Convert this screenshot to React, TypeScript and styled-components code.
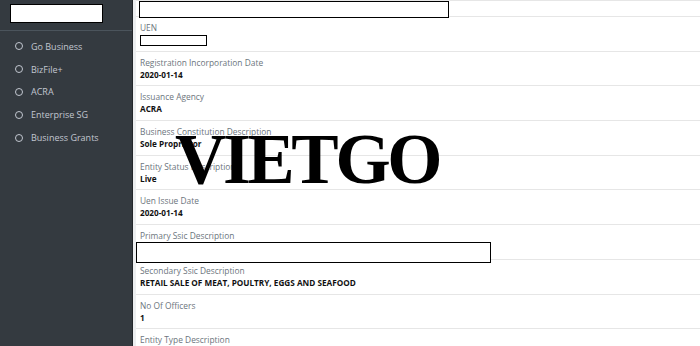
import React from 'react';
import styled, { createGlobalStyle } from 'styled-components';

const GlobalStyle = createGlobalStyle`
  html, body {
    margin: 0;
    padding: 0;
    height: 346px;
    overflow: hidden;
    background: #ffffff;
  }
  * {
    box-sizing: border-box;
  }
`;

const Layout = styled.div`
  display: flex;
  width: 700px;
  height: 346px;
  font-family: "Open Sans", "Noto Sans", Arial, sans-serif;
`;

const Sidebar = styled.aside`
  width: 133px;
  flex-shrink: 0;
  background: #343a40;
  border-right: 1px solid #23272b;
  display: flex;
  flex-direction: column;
`;

const Brand = styled.div`
  height: 31px;
  padding: 4px 0 0 10px;
  border-bottom: 1px solid #4b545c;
`;

const Redact = styled.div<{ $w: number; $h: number }>`
  width: ${p => p.$w}px;
  height: ${p => p.$h}px;
  background: #ffffff;
  border: 1.5px solid #000000;
`;

const Nav = styled.nav`
  display: flex;
  flex-direction: column;
  padding-top: 4px;
`;

const NavItem = styled.a`
  display: flex;
  align-items: center;
  gap: 8px;
  height: 22.8px;
  padding-left: 15px;
  color: #c2c7d0;
  font-size: 9px;
  text-decoration: none;
`;

const Ring = styled.span`
  width: 8px;
  height: 8px;
  border-radius: 50%;
  border: 1.8px solid #c2c7d0;
`;

const Content = styled.main`
  position: relative;
  flex: 1;
  border-left: 3px solid #eceef0;
  overflow: hidden;
`;

const Row = styled.div`
  border-bottom: 1px solid #e6e6e6;
  padding: 5px 4px 4.7px;
`;

const TopRow = styled.div`
  border-top: 1px solid #e6e6e6;
  border-bottom: 1px solid #e6e6e6;
  height: 17px;
  padding: 0 0 0 3px;
`;

const Label = styled.div`
  color: #6c757d;
  font-size: 8.4px;
  line-height: 12px;
`;

const Value = styled.div`
  color: #111111;
  font-size: 8.2px;
  font-weight: 700;
  line-height: 12px;
  min-height: 12px;
`;

const ValueBox = styled.div`
  padding-top: 1px;
  height: 12px;
`;

const Overhang = styled.div`
  margin-left: -4px;
  height: 12px;
`;

const Watermark = styled.div`
  position: absolute;
  left: 39px;
  top: 124px;
  font-family: "Liberation Serif", "Times New Roman", serif;
  font-weight: 700;
  font-size: 71px;
  line-height: 1;
  letter-spacing: -3.3px;
  color: #000000;
  pointer-events: none;
`;

const navItems = ['Go Business', 'BizFile+', 'ACRA', 'Enterprise SG', 'Business Grants'];

const fields: { label: string; value: string }[] = [
  { label: 'Registration Incorporation Date', value: '2020-01-14' },
  { label: 'Issuance Agency', value: 'ACRA' },
  { label: 'Business Constitution Description', value: 'Sole Proprietor' },
  { label: 'Entity Status Description', value: 'Live' },
  { label: 'Uen Issue Date', value: '2020-01-14' },
];

const App: React.FC = () => {
  return (
    <>
      <GlobalStyle />
      <Layout>
        <Sidebar>
          <Brand>
            <Redact $w={93} $h={19} />
          </Brand>
          <Nav>
            {navItems.map(item => (
              <NavItem key={item}>
                <Ring />
                {item}
              </NavItem>
            ))}
          </Nav>
        </Sidebar>

        <Content>
          <TopRow>
            <Redact $w={310} $h={17} />
          </TopRow>

          <Row>
            <Label>UEN</Label>
            <ValueBox>
              <Redact $w={67} $h={11} />
            </ValueBox>
          </Row>

          {fields.map(f => (
            <Row key={f.label}>
              <Label>{f.label}</Label>
              <Value>{f.value}</Value>
            </Row>
          ))}

          <Row>
            <Label>Primary Ssic Description</Label>
            <Overhang>
              <Redact $w={355} $h={21} />
            </Overhang>
          </Row>

          <Row>
            <Label>Secondary Ssic Description</Label>
            <Value>RETAIL SALE OF MEAT, POULTRY, EGGS AND SEAFOOD</Value>
          </Row>

          <Row>
            <Label>No Of Officers</Label>
            <Value>1</Value>
          </Row>

          <Row>
            <Label>Entity Type Description</Label>
          </Row>

          <Watermark>VIETGO</Watermark>
        </Content>
      </Layout>
    </>
  );
};

export default App;
